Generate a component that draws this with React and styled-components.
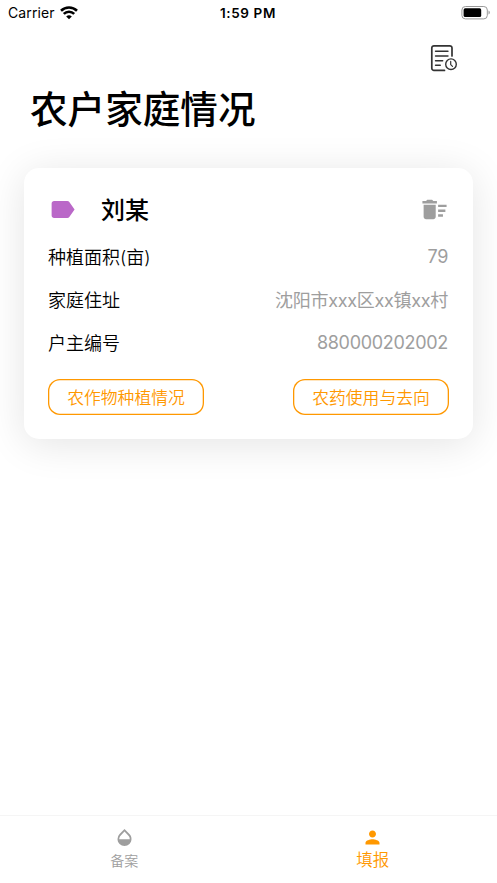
import React, { useState } from "react";
import styled, { createGlobalStyle } from "styled-components";
import { MdLabel, MdDeleteSweep, MdOpacity, MdPerson } from "react-icons/md";

const GlobalStyle = createGlobalStyle`
  * {
    box-sizing: border-box;
  }
  body {
    margin: 0;
    background-color: #fff;
    font-family: Inter, "Noto Sans CJK SC", sans-serif;
    color: #000;
  }
`;

const Screen = styled.div`
  height: 100vh;
  display: flex;
  flex-direction: column;
  overflow: hidden;
`;

const StatusBar = styled.div`
  height: 26px;
  padding: 0 6px 0 8px;
  display: grid;
  grid-template-columns: 1fr auto 1fr;
  align-items: center;
`;
const Carrier = styled.div`
  display: flex;
  align-items: center;
  gap: 5px;
  font-size: 14px;
  line-height: 26px;
  letter-spacing: 0.1px;
`;
const Time = styled.div`
  padding-right: 3px;
  font-size: 13.5px;
  font-weight: 600;
  line-height: 26px;
  letter-spacing: 0.6px;
`;
const Battery = styled.svg`
  justify-self: end;
`;

const Toolbar = styled.div`
  height: 62px;
  padding: 18px 39px 0 0;
  display: flex;
  justify-content: flex-end;
`;
const Title = styled.h1`
  margin: 0;
  padding: 1px 0 0 30px;
  height: 80px;
  font-size: 37.6px;
  font-weight: 500;
  line-height: 42px;
`;

const Card = styled.div`
  margin: 0 24px;
  height: 271px;
  padding: 24px;
  border-radius: 15px;
  background-color: #fff;
  box-shadow: 0 5px 40px rgba(0, 0, 0, 0.11);
`;
const CardHead = styled.div`
  height: 34px;
  display: flex;
  align-items: center;
  margin-bottom: 9.5px;
`;
const Name = styled.div`
  flex: 1;
  margin-left: 24px;
  padding-top: 3px;
  font-size: 24px;
  font-weight: 500;
  line-height: 34px;
`;
const Row = styled.div`
  height: 43.2px;
  display: flex;
  justify-content: space-between;
  font-size: 18px;
  line-height: 43px;
`;
const Label = styled.span`
  padding-top: 0.5px;
  font-weight: 350;
`;
const Value = styled.span`
  padding-right: 1px;
  font-weight: ${(props) => (props.$numeric ? 400 : 380)};
  line-height: ${(props) => (props.$numeric ? "41px" : "43px")};
  letter-spacing: -0.3px;
  color: #9e9e9e;
`;
const Actions = styled.div`
  display: flex;
  justify-content: space-between;
  margin-top: 14px;
`;
const Button = styled.button`
  width: 156px;
  height: 36px;
  padding: 0;
  border: none;
  border-radius: 12px;
  background: none;
  box-shadow: inset 0 0 0 1.3px #ff9800;
  color: #ff9800;
  font-family: inherit;
  font-size: 16.8px;
  font-weight: 350;
`;

const TabBar = styled.div`
  margin-top: auto;
  height: 68px;
  display: flex;
  border-top: 1px solid #f5f5f5;
`;
const Tab = styled.div`
  flex: 1;
  display: flex;
  flex-direction: column;
  align-items: center;
  padding-top: 11px;
  color: ${(props) => (props.$active ? "#ff9800" : "#9e9e9e")};
`;
const TabLabel = styled.span`
  font-size: ${(props) => (props.$active ? "16.5px" : "14px")};
  line-height: ${(props) => (props.$active ? "25px" : "26px")};
  font-weight: 350;
`;

const rows = [
  { label: "种植面积(亩)", value: "79", numeric: true },
  { label: "家庭住址", value: "沈阳市xxx区xx镇xx村" },
  { label: "户主编号", value: "880000202002", numeric: true },
];

const tabs = [
  { label: "备案", Icon: MdOpacity },
  { label: "填报", Icon: MdPerson },
];

function WifiIcon() {
  return (
    <svg width="18" height="14" viewBox="0 0 18 14" fill="none" stroke="#000" strokeWidth="2.6">
      <path d="M1 4.7a11.5 11.5 0 0 1 16 0" />
      <path d="M3.8 7.9a7.4 7.4 0 0 1 10.4 0" />
      <path d="M9 13.3 6.2 10.5a4 4 0 0 1 5.6 0z" fill="#000" stroke="none" />
    </svg>
  );
}

function BatteryIcon() {
  return (
    <Battery width="30" height="14" viewBox="0 0 30 14">
      <rect x="0.9" y="0.5" width="25.4" height="12.4" rx="3.5" fill="none" stroke="#999" />
      <rect x="2.6" y="2.3" width="17.6" height="8.8" rx="1.6" fill="#000" />
      <path d="M27.5 4.6c1.8.7 1.8 3.3 0 4z" fill="#999" />
    </Battery>
  );
}

function RecordIcon() {
  return (
    <svg width="28" height="29" viewBox="0 0 28 29" fill="none" stroke="#333" strokeLinecap="round">
      <path
        d="M22 12V4a2.2 2.2 0 0 0-2.2-2.2H4A2.2 2.2 0 0 0 1.8 4v20.2A2.2 2.2 0 0 0 4 26.4h10.5"
        strokeWidth="1.7"
      />
      <path d="M5.5 7.3H18M5.5 12H18M5.5 16.7h7.2M5.5 21.3h4.8" strokeWidth="1.4" />
      <circle cx="21" cy="20.2" r="5.3" strokeWidth="1.4" />
      <path d="M20.7 17.4v3.2l1.8 1.8" strokeWidth="1.2" />
    </svg>
  );
}

function App() {
  const [active, setActive] = useState(1);

  return (
    <Screen>
      <GlobalStyle />
      <StatusBar>
        <Carrier>
          Carrier
          <WifiIcon />
        </Carrier>
        <Time>1:59 PM</Time>
        <BatteryIcon />
      </StatusBar>
      <Toolbar>
        <RecordIcon />
      </Toolbar>
      <Title>农户家庭情况</Title>
      <Card>
        <CardHead>
          <MdLabel size={29} color="#ba68c8" />
          <Name>刘某</Name>
          <MdDeleteSweep size={29} color="#9e9e9e" />
        </CardHead>
        {rows.map((row) => (
          <Row key={row.label}>
            <Label>{row.label}</Label>
            <Value $numeric={row.numeric}>{row.value}</Value>
          </Row>
        ))}
        <Actions>
          <Button>农作物种植情况</Button>
          <Button>农药使用与去向</Button>
        </Actions>
      </Card>
      <TabBar>
        {tabs.map(({ label, Icon }, i) => (
          <Tab key={label} $active={i === active} onClick={() => setActive(i)}>
            <Icon size={21} />
            <TabLabel $active={i === active}>{label}</TabLabel>
          </Tab>
        ))}
      </TabBar>
    </Screen>
  );
}

export default App;
